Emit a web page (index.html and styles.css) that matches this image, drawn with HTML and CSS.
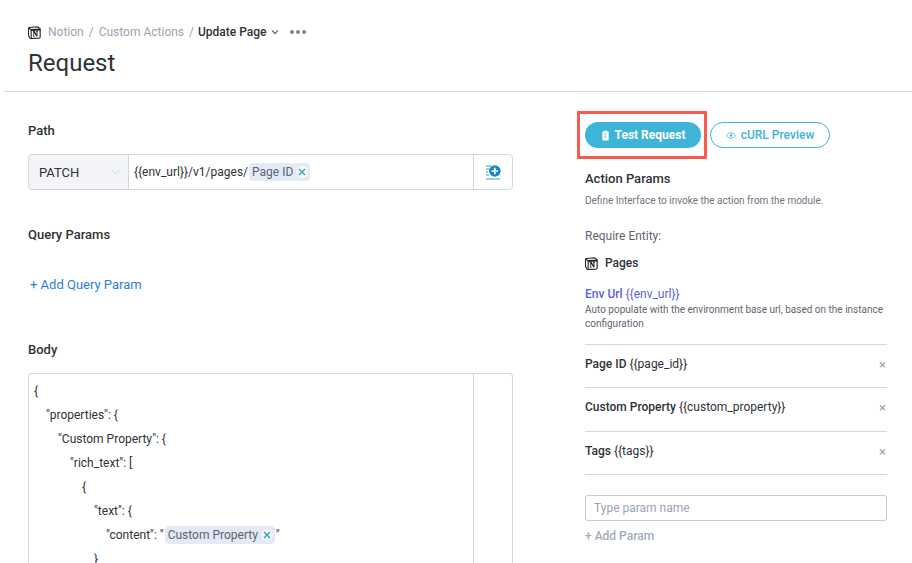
FILE: index.html
```html
<!DOCTYPE html>
<html lang="en">
<head>
<meta charset="utf-8">
<title>Request</title>
<link rel="stylesheet" href="styles.css">
</head>
<body>
<svg width="0" height="0" class="defs">
  <symbol id="notion" viewBox="0 0 14 14">
    <path d="M1.500 1.600 9.600.8c.5 0 .8.1 1.100.3l2 1.500c.3.200.4.400.4.700v8.600c0 .7-.3 1-1 1.100l-8.800.5c-.5 0-.8-.1-1.100-.5L.9 10.800c-.2-.3-.4-.6-.4-1V2.700c0-.5.400-1 1-1.100Z" fill="#fff" stroke="#1f2328" stroke-width="1.200"/>
    <path d="M1 2.200 3 3.900l9.700-.6v.9l-9.300.6v8" fill="none" stroke="#1f2328" stroke-width="1.200"/>
    <path d="M5.200 5.500h2l2 3.400V6.100l-.7-.1v-.5h2.200V6l-.5.1v5.200h-1L6.600 7.500v3l.7.2v.5H5.100v-.5l.6-.2V6.100l-.5-.1Z" fill="#1f2328"/>
  </symbol>
</svg>

<header class="top">
  <nav class="crumbs">
    <svg class="logo"><use href="#notion"/></svg>
    <span>Notion</span><span class="sep">/</span><span>Custom Actions</span><span class="sep">/</span>
    <strong>Update Page</strong>
    <svg class="chev" viewBox="0 0 8 6"><path d="M1 1.500 4 4.500 7 1.500" fill="none" stroke="#6b7280" stroke-width="1.300"/></svg>
    <span class="dots"><i></i><i></i><i></i></span>
  </nav>
  <h1>Request</h1>
</header>

<main class="columns">
  <section class="left">
    <h2 class="path-title">Path</h2>
    <div class="path-box">
      <div class="method">PATCH
        <svg viewBox="0 0 10 6"><path d="M1 1 5 5 9 1" fill="none" stroke="#c3c8d0" stroke-width="1"/></svg>
      </div>
      <div class="path-value">{{env_url}}/v1/pages/<span class="tag">Page ID <svg class="tag-x" viewBox="0 0 12 12"><circle cx="6" cy="6" r="6" fill="#f5f8fb"/><path d="M3 3 9 9M9 3 3 9" stroke="#2c9fb8" stroke-width="1.300"/></svg></span></div>
      <div class="path-icon">
        <svg viewBox="0 0 16 16" width="16" height="16">
          <path d="M1 2h5M1 5h3M1 8h2M1 11h3M1 15h14" stroke="#2f9fd0" stroke-width="1.200" fill="none"/>
          <circle cx="9.800" cy="7" r="5.800" fill="#1787c4"/>
          <path d="M9.800 3.800v6.400M6.600 7h6.400" stroke="#fff" stroke-width="1.700"/>
        </svg>
      </div>
    </div>

    <h2 class="query-title">Query Params</h2>
    <a class="add-query">+ Add Query Param</a>

    <h2 class="body-title">Body</h2>
    <div class="body-box">
      <div class="code">
        <div class="line">{</div>
        <div class="line i1">"properties": {</div>
        <div class="line i2">"Custom Property": {</div>
        <div class="line i3">"rich_text": [</div>
        <div class="line i4">{</div>
        <div class="line i5">"text": {</div>
        <div class="line i6">"content": "<span class="tag code-tag">Custom Property <svg class="tag-x" viewBox="0 0 12 12"><circle cx="6" cy="6" r="6" fill="#f5f8fb"/><path d="M3 3 9 9M9 3 3 9" stroke="#2c9fb8" stroke-width="1.300"/></svg></span>"</div>
        <div class="line i5">}</div>
      </div>
      <div class="body-side"></div>
    </div>
  </section>

  <aside class="right">
    <div class="actions">
      <button class="btn primary">
        <svg viewBox="0 0 10 12" width="9" height="11"><path d="M1.500 1.500h1.500V.8h4v.7h1.500V11.500h-7Z" fill="#fff"/><path d="M3.500 5h3M3.500 7.500h3" stroke="#3db4d8" stroke-width=".8"/></svg>
        Test Request
      </button>
      <button class="btn outline">
        <svg viewBox="0 0 12 8" width="10" height="7"><path d="M.7 4C2 1.800 4 .8 6 .8s4 1 5.300 3.200C10 6.200 8 7.200 6 7.200S2 6.200.7 4Z" fill="none" stroke="#3db4d8" stroke-width="1"/><circle cx="6" cy="4" r="1.500" fill="#3db4d8"/></svg>
        cURL Preview
      </button>
      <div class="highlight"></div>
    </div>

    <h2 class="params-title">Action Params</h2>
    <p class="params-desc">Define Interface to invoke the action from the module.</p>
    <p class="entity-label">Require Entity:</p>
    <div class="entity"><svg class="logo"><use href="#notion"/></svg><span>Pages</span></div>

    <div class="env">
      <div class="env-name"><b>Env Url</b> {{env_url}}</div>
      <p>Auto populate with the environment base url, based on the instance configuration</p>
    </div>

    <ul class="params">
      <li><span><b>Page ID</b> {{page_id}}</span><span class="x">×</span></li>
      <li><span><b>Custom Property</b> {{custom_property}}</span><span class="x">×</span></li>
      <li><span><b>Tags</b> {{tags}}</span><span class="x">×</span></li>
    </ul>

    <div class="param-input">Type param name</div>
    <a class="add-param">+ Add Param</a>
  </aside>
</main>
</body>
</html>
```
FILE: styles.css
```css
* { box-sizing: border-box; }
html, body { height: 563px; overflow: hidden; }
body {
  margin: 0;
  background: #fff;
  color: #2f3237;
  font-family: Roboto, "Liberation Sans", sans-serif;
  font-size: 12px;
}
.defs { position: absolute; }
h1, h2, p, ul { margin: 0; padding: 0; }

.top {
  margin-left: 4px;
  height: 92px;
  padding: 24px 0 0 24px;
  border-bottom: 1px solid #d3d5d9;
}
.crumbs {
  display: flex;
  align-items: center;
  height: 16px;
  color: #9aa3b2;
  font-size: 12px;
}
.crumbs .logo { width: 13px; height: 13px; margin-right: 7px; }
.sep { margin: 0 5px; }
.crumbs strong { margin-left: -1px; color: #2f3237; font-weight: 500; }
.chev { width: 8px; height: 6px; margin-left: 4px; }
.dots { display: flex; gap: 2px; margin-left: 11px; }
.dots i { width: 4px; height: 4px; border-radius: 50%; background: #7c8490; }
h1 {
  margin-top: 8px;
  font-size: 24px;
  line-height: 30px;
  font-weight: 400;
  color: #2f3237;
}

.columns { display: flex; height: 471px; padding-left: 28px; overflow: hidden; }
.left { width: 485px; flex: none; }
.right { width: 302px; flex: none; margin-left: 72px; }

h2 { font-size: 13px; font-weight: 500; line-height: 18px; color: #2f3237; }
.path-title { margin-top: 30px; }
.path-box {
  display: flex;
  height: 36px;
  margin-top: 14px;
  border: 1px solid #d3d6dc;
  border-radius: 4px;
  overflow: hidden;
}
.method {
  display: flex;
  align-items: center;
  justify-content: space-between;
  width: 100px;
  padding: 0 8px 0 10px;
  background: #f2f4f8;
  border-right: 1px solid #d3d6dc;
  font-size: 13px;
}
.method svg { width: 9px; height: 6px; }
.path-value {
  flex: 1;
  display: flex;
  align-items: center;
  padding-left: 5px;
  font-size: 12px;
  white-space: pre;
}
.path-icon {
  display: flex;
  align-items: center;
  justify-content: center;
  width: 39px;
  border-left: 1px solid #d3d6dc;
}
.tag {
  display: inline-flex;
  align-items: center;
  height: 18px;
  margin-left: 1px;
  padding: 0 2px 0 3px;
  background: #e3eaf5;
  border-radius: 4px;
  color: #5a6472;
}
.tag-x { width: 12px; height: 12px; }

.query-title { margin-top: 36px; }
.add-query {
  display: block;
  margin-top: 32px;
  padding-left: 2px;
  line-height: 18px;
  font-size: 13px;
  color: #2b7fd8;
}
.body-title { margin-top: 47px; }
.body-box {
  display: flex;
  height: 190px;
  margin-top: 14px;
  border: 1px solid #d3d6dc;
  border-bottom: 0;
  border-radius: 4px 4px 0 0;
}
.code { flex: 1; height: 189px; padding-top: 5px; overflow: hidden; }
.line { display: flex; align-items: center; height: 24px; padding-left: 5px; font-size: 12px; white-space: pre; }
.i1 { padding-left: 17px; }
.i2 { padding-left: 29px; }
.i3 { padding-left: 41px; }
.i4 { padding-left: 53px; }
.i5 { padding-left: 65px; }
.i6 { padding-left: 77px; }
.code-tag { margin: 0 1px 0 1px; }
.body-side { width: 39px; border-left: 1px solid #d3d6dc; }

.actions { position: relative; display: flex; gap: 9px; margin-top: 30px; }
.btn {
  display: inline-flex;
  align-items: center;
  justify-content: center;
  gap: 5px;
  height: 26px;
  border-radius: 13px;
  font-family: inherit;
  font-size: 12px;
  font-weight: 700;
  padding: 0;
}
.primary { width: 116px; background: #3db4d8; border: 0; color: #fff; }
.outline { width: 120px; background: #fff; border: 1px solid #3db4d8; color: #3db4d8; font-weight: 500; }
.highlight {
  position: absolute;
  left: -8px;
  top: -11px;
  width: 130px;
  height: 48px;
  border: 3px solid #fb5a4e;
  pointer-events: none;
}
.params-title { margin-top: 22px; }
.params-desc { margin-top: 6px; font-size: 10px; line-height: 14px; color: #6f7680; }
.entity-label { margin-top: 20px; font-size: 12px; line-height: 16px; color: #5f6670; }
.entity {
  display: flex;
  align-items: center;
  gap: 7px;
  height: 16px;
  margin-top: 11px;
  font-size: 12px;
  font-weight: 500;
}
.entity .logo { width: 13px; height: 13px; }
.env { margin-top: 15px; }
.env-name { font-size: 12px; line-height: 16px; color: #5a5fe0; }
.env-name b { font-weight: 500; }
.env p { margin-top: 1px; font-size: 10px; line-height: 14px; color: #5f6670; }

.params { list-style: none; margin-top: 13px; border-top: 1px solid #d3d6dc; }
.params li {
  display: flex;
  justify-content: space-between;
  height: 43.330px;
  padding: 10px 0 0;
  border-bottom: 1px solid #d3d6dc;
  font-size: 12px;
  line-height: 18px;
}
.params b { font-weight: 500; }
.params .x { margin-right: 1px; color: #9aa0aa; font-size: 13px; line-height: 20px; }

.param-input {
  display: flex;
  align-items: center;
  height: 26px;
  margin-top: 20px;
  padding-left: 8px;
  border: 1px solid #c9cdd4;
  border-radius: 3px;
  font-size: 12px;
  color: #9aa3b2;
}
.add-param {
  display: block;
  margin-top: 7px;
  font-size: 12px;
  line-height: 16px;
  font-weight: 500;
  color: #a3abb8;
}
```
